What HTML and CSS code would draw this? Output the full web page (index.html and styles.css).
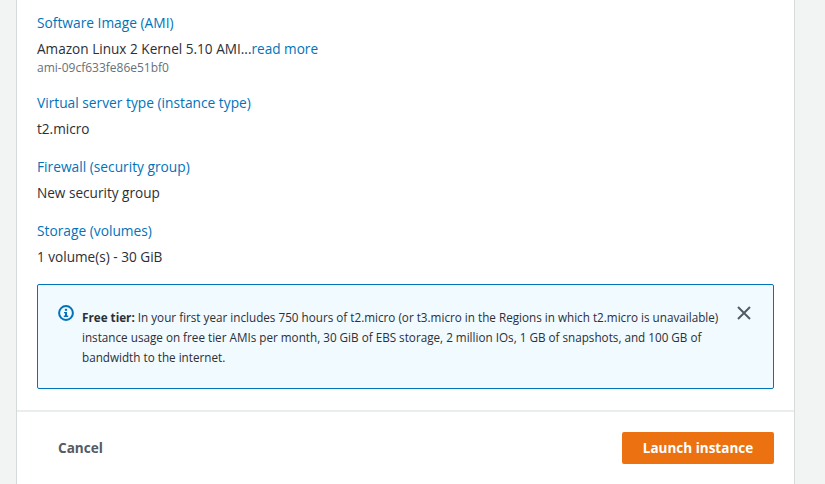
FILE: index.html
```html
<!DOCTYPE html>
<html lang="en">
<head>
<meta charset="utf-8">
<title>Launch instance summary</title>
<link rel="stylesheet" href="styles.css">
</head>
<body>
<main class="card">
  <section class="body">
    <div class="item">
      <a class="label">Software Image (AMI)</a>
      <div class="value">Amazon Linux 2 Kernel 5.10 AMI...<a class="link">read more</a></div>
      <div class="sub">ami-09cf633fe86e51bf0</div>
    </div>
    <div class="item">
      <a class="label">Virtual server type (instance type)</a>
      <div class="value">t2.micro</div>
    </div>
    <div class="item">
      <a class="label">Firewall (security group)</a>
      <div class="value">New security group</div>
    </div>
    <div class="item">
      <a class="label">Storage (volumes)</a>
      <div class="value">1 volume(s) - 30 GiB</div>
    </div>
    <div class="alert">
      <svg class="info" width="16" height="16" viewBox="0 0 16 16" aria-hidden="true">
        <circle cx="8" cy="8" r="6.9" fill="none" stroke="#0073bb" stroke-width="2"/>
        <rect x="6.9" y="3.8" width="2.2" height="2" fill="#0073bb"/>
        <path d="M6 7h3v3.6h1.2V12H5.8v-1.4H7V8.3H6z" fill="#0073bb"/>
      </svg>
      <p class="alert-text"><b>Free tier:</b> In your first year includes 750 hours of t2.micro (or t3.micro in the Regions in which t2.micro is unavailable) instance usage on free tier AMIs per month, 30 GiB of EBS storage, 2 million IOs, 1 GB of snapshots, and 100 GB of bandwidth to the internet.</p>
      <svg class="close" width="16" height="16" viewBox="0 0 16 16" aria-hidden="true">
        <path d="M2 2l12 12M14 2L2 14" fill="none" stroke="#545b64" stroke-width="2"/>
      </svg>
    </div>
  </section>
  <footer class="foot">
    <span class="cancel">Cancel</span>
    <span class="launch">Launch instance</span>
  </footer>
</main>
</body>
</html>
```
FILE: styles.css
```css
html, body {
  margin: 0;
  padding: 0;
  height: 484px;
  overflow: hidden;
  background: #f2f3f3;
}
body {
  font-family: "Open Sans", "Noto Sans", sans-serif;
  color: #16191f;
}
.card {
  box-sizing: border-box;
  width: 779px;
  height: 484px;
  margin-left: 16px;
  background: #fff;
  border-left: 1px solid #d5dbdb;
  border-right: 1px solid #d5dbdb;
  display: flex;
  flex-direction: column;
}
.body {
  box-sizing: border-box;
  height: 412px;
  padding: 13px 20px 0;
  border-bottom: 2px solid #eaeded;
}
.item {
  margin-bottom: 18px;
}
.label {
  display: block;
  font-size: 13.75px;
  line-height: 20px;
  color: #0073bb;
}
.value {
  margin-top: 6px;
  font-size: 13.6px;
  line-height: 20px;
  color: #2b2f36;
}
.link {
  color: #0073bb;
}
.sub {
  margin-top: 2px;
  font-size: 12px;
  line-height: 14px;
  color: #687078;
}
.alert {
  box-sizing: border-box;
  height: 105px;
  margin-top: -1px;
  border: 1px solid #0073bb;
  border-radius: 2px;
  background: #f1faff;
  padding: 20px 20px 0;
  display: flex;
  align-items: flex-start;
}
.info {
  flex: none;
  margin-right: 8px;
}
.alert-text {
  margin: 0;
  flex: 1;
  padding-top: 2px;
  font-size: 11.7px;
  line-height: 20px;
  color: #2b2f36;
}
.close {
  flex: none;
  margin-left: 16px;
  margin-right: 1px;
}
.foot {
  flex: 1;
  display: flex;
  align-items: center;
  justify-content: space-between;
  padding: 0 20px 0 41px;
}
.cancel {
  padding-bottom: 1px;
  font-size: 13.6px;
  font-weight: 700;
  color: #545b64;
}
.launch {
  box-sizing: border-box;
  width: 152px;
  height: 32px;
  border-radius: 2px;
  background: #ec7211;
  color: #fff;
  font-size: 13.5px;
  font-weight: 700;
  line-height: 32px;
  text-align: center;
}
```
